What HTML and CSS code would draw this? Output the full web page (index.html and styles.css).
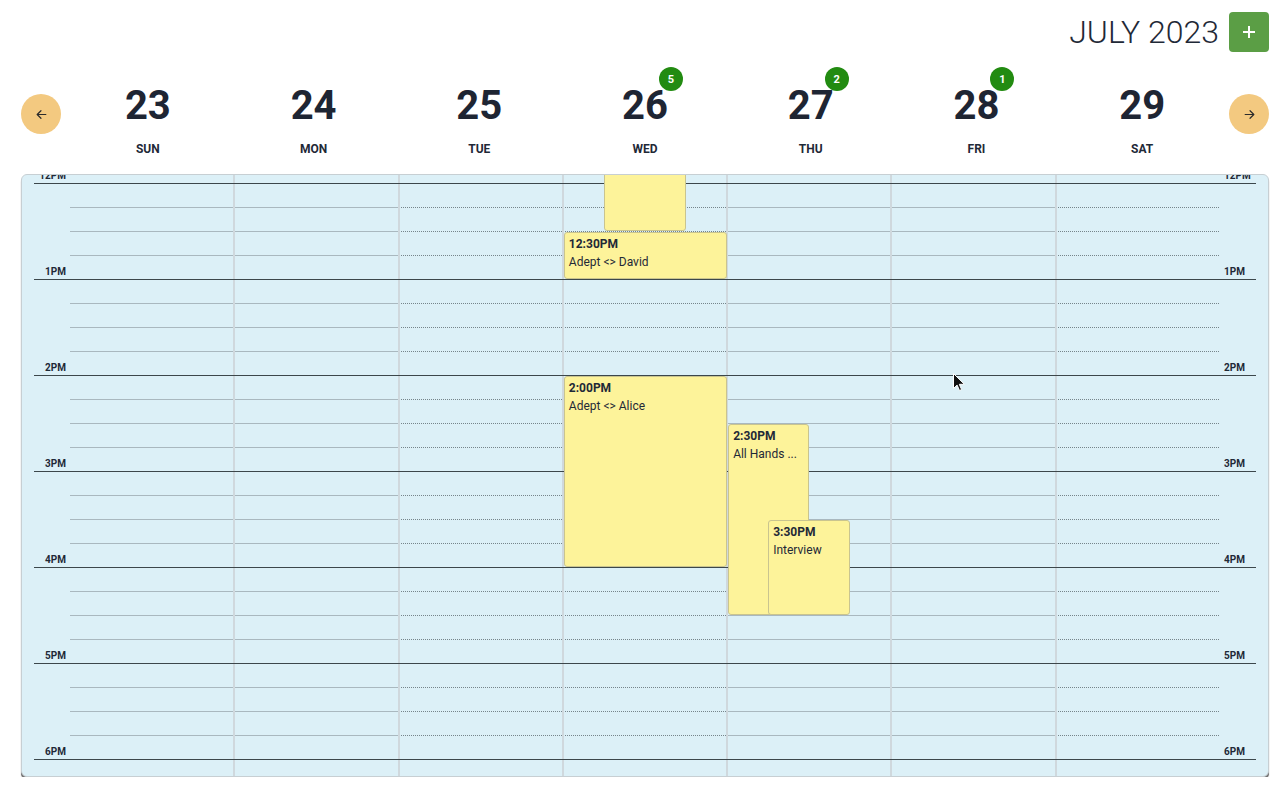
FILE: index.html
```html
<!DOCTYPE html>
<html lang="en">
<head>
<meta charset="utf-8">
<title>Week calendar</title>
<link rel="stylesheet" href="styles.css">
</head>
<body>
<div class="app">
  <header class="topbar">
    <h1 class="month">JULY 2023</h1>
    <button class="add-btn" aria-label="Add event">
      <svg width="12" height="12" viewBox="0 0 12 12"><path d="M6 0v12M0 6h12" stroke="#fff" stroke-width="2" fill="none"/></svg>
    </button>
  </header>

  <div class="week-head">
    <button class="nav-btn" aria-label="Previous week">
      <svg width="13" height="13" viewBox="0 0 24 24"><path d="M20 12H4M11 5l-7 7 7 7" stroke="#2b2b2b" stroke-width="2.2" fill="none" stroke-linecap="round" stroke-linejoin="round"/></svg>
    </button>
    <div class="days-head">
      <div class="day-h"><div class="num-wrap"><span class="num">23</span></div><div class="dname">SUN</div></div>
      <div class="day-h"><div class="num-wrap"><span class="num">24</span></div><div class="dname">MON</div></div>
      <div class="day-h"><div class="num-wrap"><span class="num">25</span></div><div class="dname">TUE</div></div>
      <div class="day-h"><div class="num-wrap"><span class="num">26</span><span class="badge">5</span></div><div class="dname">WED</div></div>
      <div class="day-h"><div class="num-wrap"><span class="num">27</span><span class="badge">2</span></div><div class="dname">THU</div></div>
      <div class="day-h"><div class="num-wrap"><span class="num">28</span><span class="badge">1</span></div><div class="dname">FRI</div></div>
      <div class="day-h"><div class="num-wrap"><span class="num">29</span></div><div class="dname">SAT</div></div>
    </div>
    <button class="nav-btn" aria-label="Next week">
      <svg width="13" height="13" viewBox="0 0 24 24"><path d="M4 12h16M13 5l7 7-7 7" stroke="#2b2b2b" stroke-width="2.2" fill="none" stroke-linecap="round" stroke-linejoin="round"/></svg>
    </button>
  </div>

  <div class="cal">
    <div class="bg">
      <div class="bgcol solid"></div>
      <div class="bgcol solid"></div>
      <div class="bgcol dotted"></div>
      <div class="bgcol dotted"></div>
      <div class="bgcol solid"></div>
      <div class="bgcol solid"></div>
      <div class="bgcol dotted"></div>
    </div>

    <div class="hours">
      <div class="hour first"><span class="lbl">12PM</span><span class="lbl r">12PM</span></div>
      <div class="hour"><span class="lbl">1PM</span><span class="lbl r">1PM</span></div>
      <div class="hour"><span class="lbl">2PM</span><span class="lbl r">2PM</span></div>
      <div class="hour"><span class="lbl">3PM</span><span class="lbl r">3PM</span></div>
      <div class="hour"><span class="lbl">4PM</span><span class="lbl r">4PM</span></div>
      <div class="hour"><span class="lbl">5PM</span><span class="lbl r">5PM</span></div>
      <div class="hour"><span class="lbl">6PM</span><span class="lbl r">6PM</span></div>
    </div>

    <div class="events">
      <div class="ecol"></div>
      <div class="ecol"></div>
      <div class="ecol"></div>
      <div class="ecol">
        <div class="ev" style="top:-39px;height:95px;left:25%;width:50%;"></div>
        <div class="ev" style="top:57px;height:47px;left:1px;right:0;"><div class="t">12:30PM</div><div class="n">Adept &lt;&gt; David</div></div>
        <div class="ev" style="top:201px;height:191px;left:1px;right:0;"><div class="t">2:00PM</div><div class="n">Adept &lt;&gt; Alice</div></div>
      </div>
      <div class="ecol">
        <div class="ev" style="top:249px;height:191px;left:1px;width:calc(50% - 1px);"><div class="t">2:30PM</div><div class="n">All Hands ...</div></div>
        <div class="ev" style="top:345px;height:95px;left:25%;width:50%;"><div class="t">3:30PM</div><div class="n">Interview</div></div>
      </div>
      <div class="ecol"></div>
      <div class="ecol"></div>
    </div>

    <svg class="cursor" width="12" height="18" viewBox="0 0 12 18"><path d="M0.5 0.5v15l3.6-3.4 2.4 5.4 2.1-0.9-2.3-5.3h5.1z" fill="#111" stroke="#fff" stroke-width="1"/></svg>
  </div>
</div>
</body>
</html>
```

FILE: styles.css
```css
html, body {
  margin: 0;
  padding: 0;
  background: #ffffff;
}

body {
  font-family: Roboto, "Liberation Sans", Arial, sans-serif;
  color: #1f2937;
}

.app {
  padding: 12px 7px 0 21px;
}

.topbar {
  display: flex;
  justify-content: flex-end;
  align-items: center;
  gap: 10px;
  height: 40px;
}

.month {
  margin: 0;
  font-size: 32px;
  line-height: 40px;
  font-weight: 300;
  color: #1f2937;
}

.add-btn {
  width: 40px;
  height: 40px;
  padding: 0;
  border: 0;
  border-radius: 4px;
  background: #5b9e45;
  display: flex;
  align-items: center;
  justify-content: center;
}

.week-head {
  display: flex;
  align-items: flex-start;
  margin-top: 34px;
}

.nav-btn {
  flex: none;
  width: 40px;
  height: 40px;
  margin-top: 8px;
  padding: 0;
  border: 0;
  border-radius: 50%;
  background: #f3c980;
  display: flex;
  align-items: center;
  justify-content: center;
}

.days-head {
  flex: 1;
  display: flex;
  margin: 0 4px;
}

.day-h {
  flex: 1;
  display: flex;
  flex-direction: column;
  align-items: center;
}

.num-wrap {
  position: relative;
}

.num {
  display: block;
  font-size: 40px;
  line-height: 40px;
  font-weight: 700;
  color: #1e2533;
}

.badge {
  position: absolute;
  left: calc(100% - 9px);
  top: -19px;
  width: 24px;
  height: 24px;
  border-radius: 50%;
  background: #228b11;
  color: #ffffff;
  font-size: 11px;
  font-weight: 700;
  display: flex;
  align-items: center;
  justify-content: center;
}

.dname {
  margin-top: 16px;
  font-size: 12px;
  line-height: 14px;
  font-weight: 700;
  color: #1f2937;
}

.cal {
  position: relative;
  margin-top: 18px;
  height: 603px;
  box-sizing: border-box;
  border: 1px solid #c7cfd3;
  border-radius: 6px;
  background: #dcf0f7;
  overflow: hidden;
  box-shadow: 0 2px 0 0 #747474, 0 3px 1px 0 #8a8a8a;
}

.bg,
.events {
  position: absolute;
  top: 0;
  bottom: 0;
  left: 48px;
  right: 48px;
  display: flex;
}

.bgcol,
.ecol {
  flex: 1 1 0;
  position: relative;
}

.bgcol::before {
  content: "";
  position: absolute;
  inset: 0;
  background-image: linear-gradient(to bottom,
    transparent 0, transparent 24px,
    var(--q) 24px, var(--q) 25px,
    transparent 25px, transparent 48px,
    var(--q) 48px, var(--q) 49px,
    transparent 49px, transparent 72px,
    var(--q) 72px, var(--q) 73px,
    transparent 73px);
  background-size: 100% 96px;
  background-position: 0 8px;
  background-repeat: repeat-y;
}

.bgcol.solid {
  --q: #a9b8bf;
}

.bgcol.dotted {
  --q: #76858b;
}

.bgcol.dotted::before {
  -webkit-mask-image: linear-gradient(to right, #000 50%, transparent 50%);
  -webkit-mask-size: 2px 100%;
  mask-image: linear-gradient(to right, #000 50%, transparent 50%);
  mask-size: 2px 100%;
}

.bgcol + .bgcol::after {
  content: "";
  position: absolute;
  top: 0;
  bottom: 0;
  left: -1px;
  width: 2px;
  background: #cfd8dd;
}

.hours {
  position: relative;
}

.hour {
  height: 96px;
  box-sizing: border-box;
  margin: 0 12px;
  border-bottom: 1px solid #3c474b;
  display: flex;
  justify-content: space-between;
  align-items: flex-end;
}

.hour.first {
  height: 9px;
}

.lbl {
  width: 36px;
  box-sizing: border-box;
  padding: 0 4px 2px 0;
  text-align: right;
  font-size: 10px;
  line-height: 10px;
  font-weight: 700;
  color: #1f2937;
  white-space: nowrap;
}

.lbl.r {
  text-align: left;
  padding: 0 0 2px 4px;
}

.ev {
  position: absolute;
  box-sizing: border-box;
  background: #fdf39a;
  border: 1px solid #c9c48f;
  border-radius: 3px;
  padding: 2px 4px;
  overflow: hidden;
  white-space: nowrap;
  font-size: 12px;
  line-height: 18px;
  color: #1f2937;
}

.ev .t {
  font-weight: 700;
}

.cursor {
  position: absolute;
  left: 931px;
  top: 198px;
}
```
